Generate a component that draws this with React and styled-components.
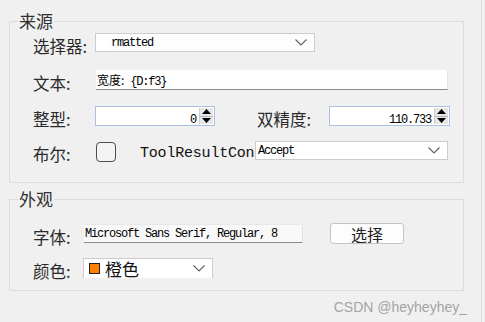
import React from "react";
import styled, { createGlobalStyle } from "styled-components";

const Global = createGlobalStyle`
  html, body { margin: 0; padding: 0; background: #f0f0f0; }
  body { width: 485px; height: 322px; overflow: hidden; }
`;

const Window = styled.div`
  box-sizing: border-box;
  width: 482px;
  height: 322px;
  padding: 21px 0 0 9px;
  border-right: 1px solid #dedede;
  font-family: "Noto Sans CJK SC", "Liberation Sans", sans-serif;
  color: #1e1e1e;
`;

const Group = styled.div`
  position: relative;
  box-sizing: border-box;
  width: 455px;
  height: ${(p) => p.$h}px;
  margin-top: ${(p) => p.$mt || 0}px;
  border: 1px solid #dcdcdc;
  padding: ${(p) => p.$pt}px 0 0 23px;
`;

const GroupTitle = styled.span`
  position: absolute;
  top: -12px;
  left: 8px;
  padding: 0 1px;
  background: #f0f0f0;
  font-size: 17px;
  line-height: 22px;
  color: #303030;
`;

const Row = styled.div`
  display: flex;
  align-items: center;
  height: ${(p) => p.$h || 20}px;
  margin-top: ${(p) => p.$mt || 0}px;
`;

const Label = styled.span`
  flex: none;
  width: ${(p) => p.$w}px;
  margin-top: 6px;
  margin-left: ${(p) => p.$ml || 0}px;
  font-size: 16.5px;
  line-height: 20px;
  color: #2a2a2a;
  white-space: nowrap;
`;

const Mono = styled.span`
  font-family: "Liberation Mono", "DejaVu Sans Mono", monospace;
  font-size: 12px;
  letter-spacing: -1.2px;
  color: #000;
  white-space: nowrap;
`;

const Combo = styled.div`
  box-sizing: border-box;
  display: flex;
  align-items: center;
  flex: none;
  width: ${(p) => p.$w}px;
  height: ${(p) => p.$h || 19}px;
  margin-left: ${(p) => p.$ml || 0}px;
  background: ${(p) => p.$bg || "#fdfdfd"};
  border: 1px solid #cccccc;
  border-bottom: ${(p) => (p.$open ? "none" : "1px solid #cccccc")};
  padding: 0 7px 0 2px;
  overflow: hidden;
`;

const ComboText = styled.div`
  flex: 1;
  display: flex;
  align-items: center;
  min-width: 0;
`;

const WhitePatch = styled.span`
  flex: none;
  width: 14px;
  height: 19px;
  margin: -1px 1px 0 -2px;
  background: #ffffff;
`;

const TextBox = styled.div`
  box-sizing: border-box;
  display: flex;
  align-items: center;
  flex: none;
  width: ${(p) => p.$w}px;
  height: ${(p) => p.$h || 20}px;
  margin-left: ${(p) => p.$ml || 0}px;
  background: ${(p) => p.$bg || "#ffffff"};
  border-right: 1px solid #e3e3e3;
  border-top: 1px solid ${(p) => p.$topc || "#ffffff"};
  border-bottom: 1px solid #8a8a8a;
  padding-left: 1px;
`;

const CjkText = styled.span`
  font-size: 12px;
  letter-spacing: 0;
  font-family: "Noto Sans CJK SC", sans-serif;
`;

const NumBox = styled.div`
  box-sizing: border-box;
  display: flex;
  align-items: center;
  flex: none;
  width: ${(p) => p.$w}px;
  height: 20px;
  margin-left: ${(p) => p.$ml || 0}px;
  background: #fff;
  border: 1px solid #a9c0de;
  padding: 1px 1px 1px 0;
`;

const NumValue = styled.div`
  flex: 1;
  text-align: right;
  padding-right: 3px;
`;

const Spinner = styled.div`
  display: flex;
  flex-direction: column;
  width: 13px;
  height: 16px;
  border-left: 1px solid #cfcfcf;
  background: #e6e6e6;
`;

const SpinBtn = styled.div`
  flex: 1;
  display: flex;
  align-items: center;
  justify-content: center;
  & + & { border-top: 1px solid #b8b8b8; }
`;

const CheckBox = styled.div`
  box-sizing: border-box;
  flex: none;
  width: 20px;
  height: 20px;
  margin: 3px 0 0 0;
  border: 1px solid #4f4f4f;
  border-radius: 4px;
  background: #f3f3f3;
`;

const ClipText = styled.div`
  flex: none;
  width: 115px;
  margin-left: 24px;
  margin-top: 6px;
  overflow: hidden;
  font-family: "Liberation Mono", "DejaVu Sans Mono", monospace;
  font-size: 15px;
  letter-spacing: -0.2px;
  white-space: nowrap;
  color: #111;
`;

const Button = styled.div`
  box-sizing: border-box;
  flex: none;
  width: 74px;
  height: 21px;
  margin-left: 27px;
  border: 1px solid #c4c4c4;
  border-radius: 3px;
  background: #fdfdfd;
  display: flex;
  align-items: center;
  justify-content: center;
  font-size: 16px;
  color: #202020;
`;

const Swatch = styled.span`
  flex: none;
  box-sizing: border-box;
  width: 11px;
  height: 11px;
  margin: 0 5px 0 3px;
  background: #ff8000;
  border: 1px solid #222;
`;

const SwatchText = styled.span`
  font-size: 17px;
  color: #111;
  line-height: 18px;
`;

const Watermark = styled.div`
  margin-top: 8px;
  padding-right: 14px;
  text-align: right;
  font-family: "Liberation Sans", Arial, sans-serif;
  font-size: 14px;
  color: #a4a4a4;
`;

const Chevron = () => (
  <svg width="12" height="7" viewBox="0 0 12 7">
    <polyline points="0.5,0.5 6,6 11.5,0.5" fill="none" stroke="#606060" strokeWidth="1.1" />
  </svg>
);

const Tri = ({ up }) => (
  <svg width="9" height="5" viewBox="0 0 9 5">
    <polygon points={up ? "4.5,0 9,5 0,5" : "0,0 9,0 4.5,5"} fill="#000" />
  </svg>
);

const Num = ({ value, w, ml }) => (
  <NumBox $w={w} $ml={ml}>
    <NumValue>
      <Mono>{value}</Mono>
    </NumValue>
    <Spinner>
      <SpinBtn><Tri up /></SpinBtn>
      <SpinBtn><Tri /></SpinBtn>
    </Spinner>
  </NumBox>
);

export default function App() {
  return (
    <>
      <Global />
      <Window>
        <Group $h={162} $pt={11}>
          <GroupTitle>来源</GroupTitle>
          <Row $h={19}>
            <Label $w={62}>选择器:</Label>
            <Combo $w={220}>
              <ComboText>
                <WhitePatch />
                <Mono>rmatted</Mono>
              </ComboText>
              <Chevron />
            </Combo>
          </Row>
          <Row $mt={18}>
            <Label $w={62}>文本:</Label>
            <TextBox $w={352} $ml={1}>
              <Mono>
                <CjkText>宽度:</CjkText> {"{D:f3}"}
              </Mono>
            </TextBox>
          </Row>
          <Row $mt={16}>
            <Label $w={62}>整型:</Label>
            <Num value="0" w={120} />
            <Label $w={72} $ml={42}>双精度:</Label>
            <Num value="110.733" w={121} />
          </Row>
          <Row $mt={13} $h={23}>
            <Label $w={63}>布尔:</Label>
            <CheckBox />
            <ClipText>ToolResultControl</ClipText>
            <Combo $w={193} $bg="#ffffff">
              <ComboText>
                <Mono>Accept</Mono>
              </ComboText>
              <Chevron />
            </Combo>
          </Row>
        </Group>
        <Group $h={92} $mt={16} $pt={23}>
          <GroupTitle>外观</GroupTitle>
          <Row $h={21}>
            <Label $w={51}>字体:</Label>
            <TextBox $w={219} $h={19} $bg="#f8f8f8" $topc="#e8e8e8">
              <Mono>Microsoft Sans Serif, Regular, 8</Mono>
            </TextBox>
            <Button>选择</Button>
          </Row>
          <Row $mt={14} $h={20}>
            <Label $w={50}>颜色:</Label>
            <Combo $w={130} $h={20} $bg="#ffffff" $open>
              <ComboText>
                <Swatch />
                <SwatchText>橙色</SwatchText>
              </ComboText>
              <Chevron />
            </Combo>
          </Row>
        </Group>
        <Watermark>CSDN @heyheyhey_</Watermark>
      </Window>
    </>
  );
}
